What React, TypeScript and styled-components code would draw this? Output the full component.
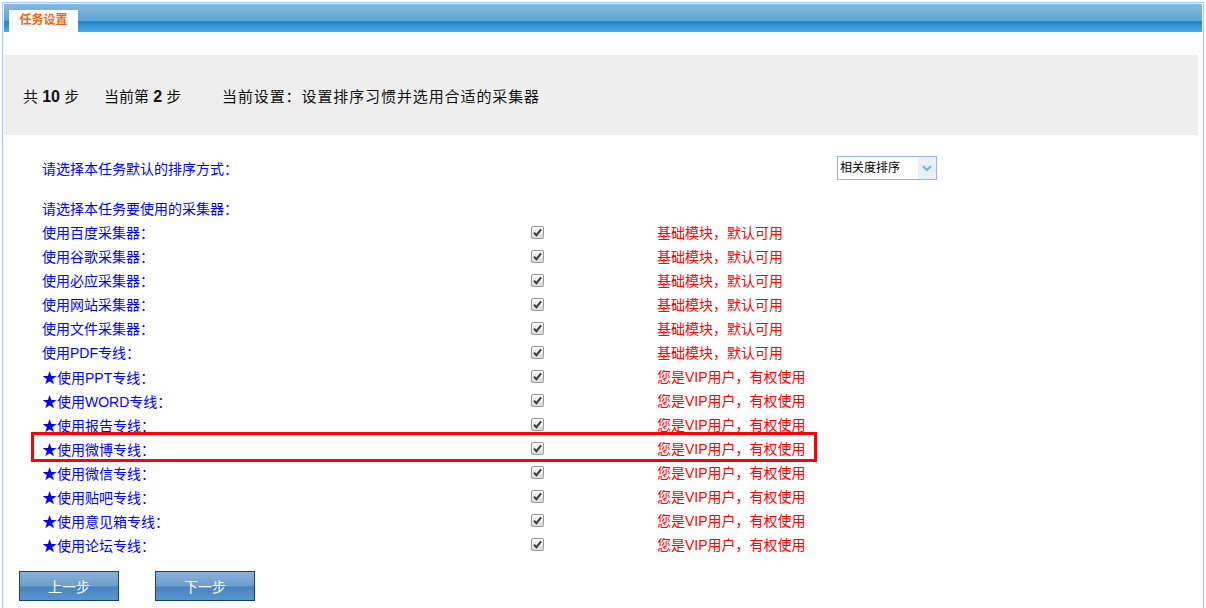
import styled, { createGlobalStyle } from 'styled-components';

interface Collector {
  label: string,
  vip: boolean,
}

const collectors: Collector[] = [
  { label: '使用百度采集器：', vip: false },
  { label: '使用谷歌采集器：', vip: false },
  { label: '使用必应采集器：', vip: false },
  { label: '使用网站采集器：', vip: false },
  { label: '使用文件采集器：', vip: false },
  { label: '使用PDF专线：', vip: false },
  { label: '使用PPT专线：', vip: true },
  { label: '使用WORD专线：', vip: true },
  { label: '使用报告专线：', vip: true },
  { label: '使用微博专线：', vip: true },
  { label: '使用微信专线：', vip: true },
  { label: '使用贴吧专线：', vip: true },
  { label: '使用意见箱专线：', vip: true },
  { label: '使用论坛专线：', vip: true },
];

const HIGHLIGHTED = 9;

const CheckMark = () => (
  <CheckBox>
    <svg width="9" height="9" viewBox="0 0 9 9">
      <path d="M1 4.6 L3.4 7.2 L8 1.4" fill="none" stroke="#3a3a3a" strokeWidth="2" />
    </svg>
  </CheckBox>
)

export default function App() {
  return (
    <>
      <GlobalStyle />
      <Frame>
        <Header>
          <Tab>任务设置</Tab>
        </Header>

        <StepBar>
          <StepItem $width={81}>共 <b>10</b> 步</StepItem>
          <StepItem $width={118}>当前第 <b>2</b> 步</StepItem>
          <StepItem $spacing={0.9}>当前设置：设置排序习惯并选用合适的采集器</StepItem>
        </StepBar>

        <Content>
          <SortRow>
            <Label>请选择本任务默认的排序方式：</Label>
            <FakeSelect>
              <SelectText>相关度排序</SelectText>
              <SelectArrow>
                <svg width="10" height="7" viewBox="0 0 10 7">
                  <path d="M1 1.2 L5 5 L9 1.2" fill="none" stroke="#6fb3ea" strokeWidth="2" />
                </svg>
              </SelectArrow>
            </FakeSelect>
          </SortRow>

          <HeadingRow>
            <Label>请选择本任务要使用的采集器：</Label>
          </HeadingRow>

          {collectors.map((c, i) => (
            <CollectorRow key={c.label}>
              <Label>{c.vip && <Star>★</Star>}{c.label}</Label>
              <CheckMark />
              <Note>{c.vip ? '您是VIP用户，有权使用' : '基础模块，默认可用'}</Note>
              {i === HIGHLIGHTED && <Highlight />}
            </CollectorRow>
          ))}
        </Content>

        <ButtonBar>
          <StepButton>上一步</StepButton>
          <StepButton>下一步</StepButton>
        </ButtonBar>
      </Frame>
    </>
  )
}

const GlobalStyle = createGlobalStyle`
  html, body {
    margin: 0;
    padding: 0;
    overflow: hidden;
    background: #ffffff;
  }
  body {
    font-family: "Liberation Sans", "Noto Sans CJK SC", sans-serif;
  }
`

const Frame = styled.div`
  margin: 2px 0 0 2px;
  width: 1202px;
  height: 640px;
  box-sizing: border-box;
  border: 1px solid #99ccff;
  padding: 1px;
`

const Header = styled.div`
  height: 28px;
  padding: 6px 0 0 5px;
  box-sizing: border-box;
  background: linear-gradient(
    to bottom,
    #8ab8dc 0%,
    #5ea4da 60%,
    #2a7ec2 61%,
    #3996d8 82%,
    #4aaeea 100%
  );
`

const Tab = styled.div`
  width: 69px;
  height: 22px;
  background: #ffffff;
  color: #ee6411;
  font-size: 12px;
  font-weight: bold;
  line-height: 21px;
  text-align: center;
`

const StepBar = styled.div`
  display: flex;
  align-items: center;
  height: 80px;
  margin: 23px 4px 0 0;
  padding-left: 19px;
  background: #eeeeee;
  font-size: 15px;
  color: #111111;

  b {
    font-family: "Liberation Sans", sans-serif;
    font-size: 16px;
  }
`

const StepItem = styled.span<{ $width?: number; $spacing?: number }>`
  flex: none;
  width: ${({ $width }) => ($width ? `${$width}px` : 'auto')};
  letter-spacing: ${({ $spacing }) => $spacing ?? 0}px;
  white-space: pre;
`

const Content = styled.div`
  padding: 21px 0 0 38px;
`

const Label = styled.span`
  font-size: 14px;
  color: #0000ff;
  white-space: nowrap;
`

const Star = styled.span`
  font-family: "Noto Sans CJK SC", sans-serif;
  font-size: 15px;
`

const SortRow = styled.div`
  display: flex;
  align-items: center;
  justify-content: space-between;
  width: 895px;
  height: 24px;
`

const HeadingRow = styled.div`
  display: flex;
  align-items: center;
  height: 24px;
  margin-top: 16px;
`

const CollectorRow = styled.div`
  position: relative;
  display: grid;
  grid-template-columns: 489px 126px 1fr;
  align-items: center;
  height: 24px;
`

const CheckBox = styled.span`
  display: flex;
  align-items: center;
  justify-content: center;
  width: 13px;
  height: 13px;
  box-sizing: border-box;
  border: 1px solid #9a9a9a;
  border-radius: 2px;
  background: linear-gradient(to bottom, #fbfbfb, #dadada);
`

const Note = styled.span`
  font-size: 14px;
  color: #ff0000;
  white-space: nowrap;
`

const Highlight = styled.div`
  position: absolute;
  left: -11px;
  top: -4px;
  width: 786px;
  height: 30px;
  box-sizing: border-box;
  border: 3px solid #ff0000;
  pointer-events: none;
`

const FakeSelect = styled.div`
  display: flex;
  width: 100px;
  height: 24px;
  box-sizing: border-box;
  border: 1px solid #92b6ee;
  background: #ffffff;
`

const SelectText = styled.span`
  flex: 1;
  padding-left: 2px;
  font-size: 12px;
  line-height: 22px;
  color: #000000;
`

const SelectArrow = styled.span`
  display: flex;
  align-items: center;
  justify-content: center;
  width: 18px;
  background: #e6effc;
`

const ButtonBar = styled.div`
  display: flex;
  gap: 36px;
  margin: 15px 0 0 15px;
`

const StepButton = styled.button`
  width: 100px;
  height: 30px;
  border: 1px solid #163e70;
  padding: 0;
  background: linear-gradient(
    to bottom,
    #8ab2d8 0%,
    #6c9dcc 50%,
    #4a84c0 53%,
    #5a95cd 100%
  );
  color: #ffffff;
  font-family: "Liberation Sans", "Noto Sans CJK SC", sans-serif;
  font-size: 14px;
  cursor: pointer;
`
